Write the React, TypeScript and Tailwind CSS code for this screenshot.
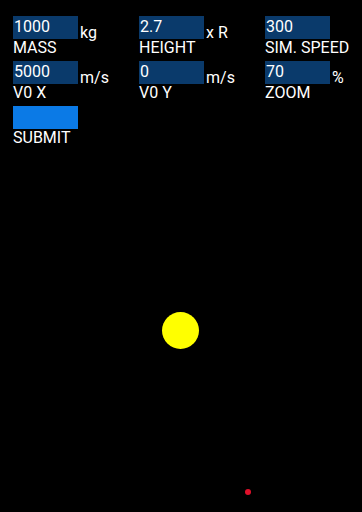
import React from 'react';

type Field = { label: string; value: string; unit?: string };

const rows: Field[][] = [
  [
    { label: 'MASS', value: '1000', unit: 'kg' },
    { label: 'HEIGHT', value: '2.7', unit: 'x R' },
    { label: 'SIM. SPEED', value: '300' },
  ],
  [
    { label: 'V0 X', value: '5000', unit: 'm/s' },
    { label: 'V0 Y', value: '0', unit: 'm/s' },
    { label: 'ZOOM', value: '70', unit: '%' },
  ],
];

function FieldCell({ f }: { f: Field }) {
  return (
    <div className="flex items-start">
      <div className="w-[65px] shrink-0">
        <div className="h-[23px] bg-[#0a3a6b] pl-[1px] text-[16px] leading-[21px] text-white">{f.value}</div>
        <div className="whitespace-nowrap text-[16px] leading-[18px] text-white">{f.label}</div>
      </div>
      {f.unit && (
        <span className="ml-[2px] mt-[8px] whitespace-nowrap text-[16px] leading-[18px] text-white">{f.unit}</span>
      )}
    </div>
  );
}

export default function App() {
  return (
    <div
      className="relative h-[512px] w-[362px] overflow-hidden bg-black"
      style={{ fontFamily: 'Roboto, "Liberation Sans", sans-serif' }}
    >
      {/* simulation canvas */}
      <svg className="absolute inset-0" width="362" height="512" viewBox="0 0 362 512">
        <circle cx="180.5" cy="330.5" r="18.5" fill="#ffff00" />
        <circle cx="248" cy="492" r="3" fill="#e0102a" />
      </svg>

      <div className="relative flex flex-col gap-[4px] pl-[13px] pt-[16px]">
        {rows.map((row, i) => (
          <div key={i} className="grid grid-cols-[126px_126px_126px]">
            {row.map((f) => (
              <FieldCell key={f.label} f={f} />
            ))}
          </div>
        ))}
        <div className="w-[65px]">
          <button className="block h-[23px] w-[65px] bg-[#0b7ae6]" />
          <div className="text-[16px] leading-[18px] text-white">SUBMIT</div>
        </div>
      </div>
    </div>
  );
}
